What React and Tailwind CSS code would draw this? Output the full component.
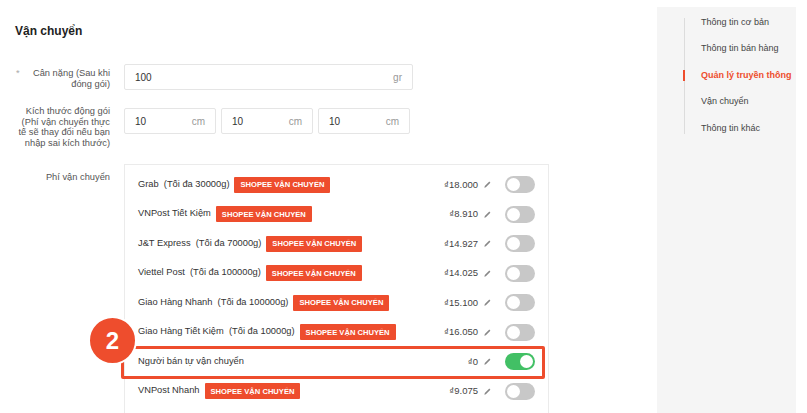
import React from 'react';

const carriers = [
  { name: 'Grab', limit: '(Tối đa 30000g)', price: '₫18.000', on: false, badge: true },
  { name: 'VNPost Tiết Kiệm', limit: '', price: '₫8.910', on: false, badge: true },
  { name: 'J&T Express', limit: '(Tối đa 70000g)', price: '₫14.927', on: false, badge: true },
  { name: 'Viettel Post', limit: '(Tối đa 100000g)', price: '₫14.025', on: false, badge: true },
  { name: 'Giao Hàng Nhanh', limit: '(Tối đa 100000g)', price: '₫15.100', on: false, badge: true },
  { name: 'Giao Hàng Tiết Kiệm', limit: '(Tối đa 10000g)', price: '₫16.050', on: false, badge: true },
  { name: 'Người bán tự vận chuyển', limit: '', price: '₫0', on: true, badge: false },
  { name: 'VNPost Nhanh', limit: '', price: '₫9.075', on: false, badge: true },
];

const menu = ['Thông tin cơ bản', 'Thông tin bán hàng', 'Quản lý truyền thông', 'Vận chuyển', 'Thông tin khác'];

const Pencil = () => (
  <svg width="9" height="9" viewBox="0 0 10 10" className="text-[#888]">
    <path d="M1.5 8.5 L2 6.8 L7 1.8 L8.2 3 L3.2 8 Z" fill="currentColor" />
  </svg>
);

const Toggle = ({ on }) => (
  <div className={`w-[30px] h-[17px] rounded-full p-[2px] flex ${on ? 'bg-[#42c065] justify-end' : 'bg-[#c8c8c8] justify-start'}`}>
    <div className="w-[13px] h-[13px] rounded-full bg-white" />
  </div>
);

const Unit = ({ value, unit, w }) => (
  <div className={`${w} h-[26px] border border-[#e5e5e5] rounded-[2px] flex items-center justify-between px-[10px] text-[10px]`}>
    <span className="text-[#333]">{value}</span>
    <span className="text-[#999]">{unit}</span>
  </div>
);

export default function App() {
  return (
    <div className="w-[807px] h-[413px] overflow-hidden bg-white flex" style={{ fontFamily: '"Liberation Sans", Arial, sans-serif' }}>
      <div className="w-[657px] pl-[15px] pt-[24px]">
        <h2 className="text-[12px] font-bold text-[#222] leading-[15px]">Vận chuyển</h2>

        <div className="flex mt-[25px]">
          <div className="w-[95px] flex justify-between text-[9.3px] leading-[11px] text-[#555]">
            <span className="text-[#aaa] pl-[1px] pt-[4px]">*</span>
            <span className="text-right pt-[4px]">Cân nặng (Sau khi<br />đóng gói)</span>
          </div>
          <div className="ml-[14px]">
            <Unit value="100" unit="gr" w="w-[289px]" />
          </div>
        </div>

        <div className="flex mt-[16px]">
          <div className="w-[95px] text-right text-[9.3px] leading-[10.5px] text-[#555]">
            Kích thước động gói (Phí vận chuyển thực tế sẽ thay đổi nếu bạn nhập sai kích thước)
          </div>
          <div className="ml-[14px] flex gap-[5px] mt-[2px] h-[26px]">
            <Unit value="10" unit="cm" w="w-[92px]" />
            <Unit value="10" unit="cm" w="w-[92px]" />
            <Unit value="10" unit="cm" w="w-[92px]" />
          </div>
        </div>

        <div className="flex mt-[16px]">
          <div className="w-[95px] text-right text-[9.3px] text-[#555] pt-[7px]">Phí vận chuyển</div>
          <div className="ml-[14px] relative w-[425px] h-[260px] border border-[#ebebeb] pt-[5px] px-[13px]">
            {carriers.map((c) => (
              <div key={c.name} className="h-[29.5px] flex items-center text-[9.3px] text-[#333]">
                <span className="whitespace-pre">{c.name}{c.limit ? '  ' + c.limit : ''}</span>
                {c.badge && (
                  <span className="ml-[5px] bg-[#ee4d2d] text-white text-[7.6px] font-bold px-[6px] h-[16px] flex items-center rounded-[1px]">
                    SHOPEE VẬN CHUYỂN
                  </span>
                )}
                <span className="ml-auto text-[9.5px] text-[#444]">{c.price}</span>
                <span className="ml-[5px] mr-[13px]"><Pencil /></span>
                <Toggle on={c.on} />
              </div>
            ))}
            <div className="absolute left-[-4px] top-[181px] w-[424px] h-[33px] border-[3px] border-[#ee4d2d] rounded-[2px]" />
            <div className="absolute left-[-37px] top-[151px] w-[49px] h-[49px] rounded-full bg-[#ee4d2d] border-[2px] border-white flex items-center justify-center text-white text-[24px] font-bold">
              2
            </div>
          </div>
        </div>
      </div>

      <div className="w-[139px] mt-[7px] bg-[#f5f5f5] pt-[2px] pl-[27px]">
        <div className="relative pl-[17px] flex flex-col">
          <span className="absolute left-0 top-[9px] bottom-[8px] w-px bg-[#dcdcdc]" />
          {menu.map((m, i) => (
            <div
              key={m}
              className={`relative h-[26.5px] flex items-center text-[9px] whitespace-nowrap ${i === 2 ? 'text-[#ee4d2d] font-bold' : 'text-[#444]'}`}
            >
              {i === 2 && <span className="absolute left-[-18px] top-[8px] w-[2px] h-[11px] bg-[#ee4d2d]" />}
              {m}
            </div>
          ))}
        </div>
      </div>
    </div>
  );
}
